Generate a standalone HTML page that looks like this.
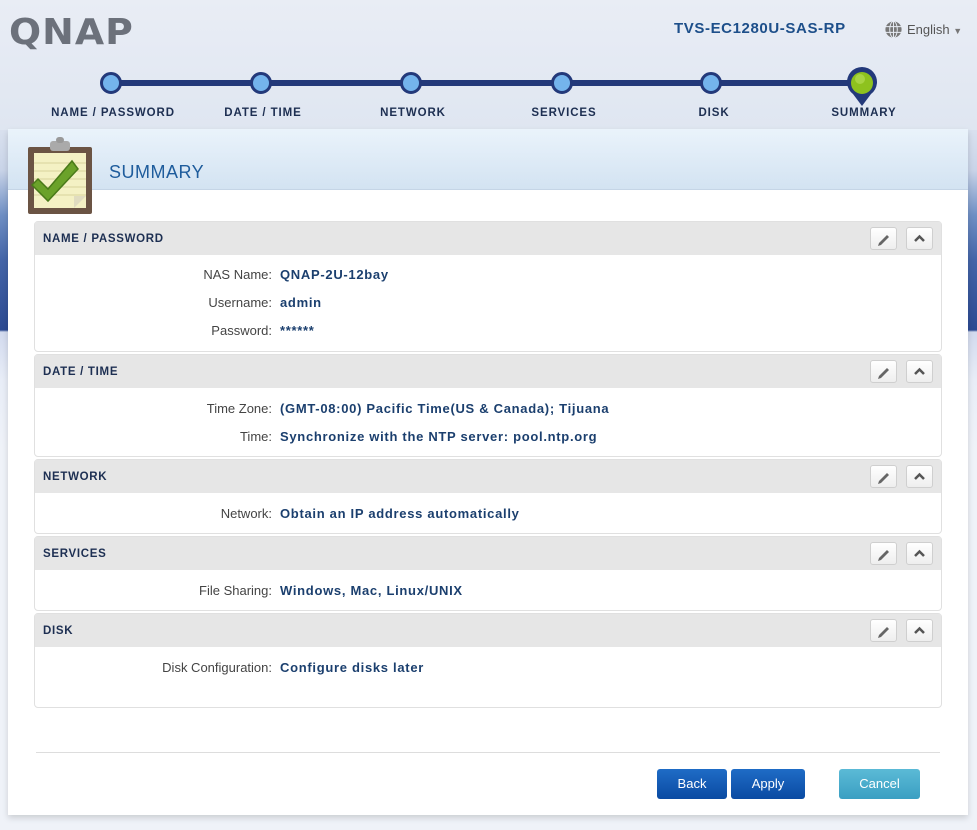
<!DOCTYPE html>
<html><head><style>
*{margin:0;padding:0;box-sizing:border-box}
body{width:977px;height:830px;overflow:hidden;font-family:"Liberation Sans",Tahoma,sans-serif;position:relative;
background:linear-gradient(to bottom,#e9edf5 0px,#dde4f0 120px,#c9d4e8 170px,#6f8fc4 215px,#4465a8 260px,#2c4a92 330px,#d2daee 332px,#e8edf7 380px,#eff2f8 450px,#eff2f8 830px);}
.top{position:absolute;left:0;top:0;width:977px;height:130px;background:linear-gradient(#e9edf5,#dfe6f1)}
.logo{position:absolute;left:9px;top:12px;font:900 36px "DejaVu Sans","Liberation Sans",sans-serif;color:#6c717b;letter-spacing:1px;transform:scaleX(1.05);transform-origin:left;}
.model{position:absolute;left:674px;top:20px;font:bold 15px "Liberation Sans",sans-serif;color:#1d4f8a;letter-spacing:.6px}
.lang{position:absolute;left:884px;top:20px;font-size:13px;color:#555}
.line{position:absolute;left:111px;top:80px;width:751px;height:6px;background:#23397a}
.dot{position:absolute;top:72px;width:22px;height:22px;border-radius:50%;background:#74b4ec;border:3px solid #23397a}
.lbl{position:absolute;top:107px;font:bold 11.5px "Liberation Sans",sans-serif;color:#1d2f52;width:160px;text-align:center;letter-spacing:.9px}
.panel{position:absolute;left:8px;top:129px;width:960px;height:686px;background:#fff;box-shadow:0 3px 6px rgba(0,0,0,.15)}
.hdr{position:absolute;left:0;top:0;width:960px;height:61px;background:linear-gradient(#eaf3fb,#d3e3f2);border-bottom:1px solid #c5d5e6}
.title{position:absolute;left:101px;top:33px;font-size:18px;color:#1e5c9c;letter-spacing:.5px}
.sec{position:absolute;left:26px;width:908px;border:1px solid #e0e0e0;border-radius:4px;background:#fff}
.sh{height:33px;background:#e6e6e6;font:bold 11.5px "Liberation Sans",sans-serif;color:#1d2f52;padding:11px 0 0 8px;position:relative;letter-spacing:.7px}
.b{position:absolute;top:5px;width:27px;height:23px;border:1px solid #cfcfcf;border-radius:3px;background:linear-gradient(#fff,#eee)}
.row{position:absolute;left:0;width:908px;font-size:13px}
.row .k{position:absolute;right:671px;color:#444;text-align:right;white-space:nowrap}
.row .v{position:absolute;left:245px;font-weight:bold;color:#1b3f6e;white-space:nowrap;letter-spacing:.7px}
.btn{position:absolute;top:640px;height:30px;border-radius:3px;color:#fff;font-size:13px;text-align:center;line-height:30px}
</style></head><body>
<div class="top"></div>
<div class="logo">QNAP</div>
<div class="model">TVS-EC1280U-SAS-RP</div>
<div class="lang"><svg width="19" height="19" viewBox="0 0 20 20" style="vertical-align:-5px;margin-right:4px"><circle cx="10" cy="10" r="8.5" fill="#777"/><g stroke="#e8edf5" stroke-width="1" fill="none"><line x1="1" y1="7" x2="19" y2="7"/><line x1="1" y1="13" x2="19" y2="13"/><line x1="10" y1="1" x2="10" y2="19"/><ellipse cx="10" cy="10" rx="4" ry="8.5"/></g></svg>English <span style="font-size:9px;color:#777">▼</span></div>
<div class="line"></div>
<div class="dot" style="left:100px"></div><div class="dot" style="left:250px"></div><div class="dot" style="left:400px"></div><div class="dot" style="left:551px"></div><div class="dot" style="left:700px"></div>
<svg style="position:absolute;left:845px;top:66px" width="34" height="42" viewBox="0 0 34 42"><path d="M17 40 L8 28 A15 15 0 1 1 26 28 Z" fill="#23397a"/><circle cx="17" cy="17" r="11" fill="#8ec21e"/><circle cx="15" cy="13" r="5" fill="#b4dc52" opacity=".7"/></svg>
<div class="lbl" style="left:33px">NAME / PASSWORD</div>
<div class="lbl" style="left:183px">DATE / TIME</div>
<div class="lbl" style="left:333px">NETWORK</div>
<div class="lbl" style="left:484px">SERVICES</div>
<div class="lbl" style="left:634px">DISK</div>
<div class="lbl" style="left:784px">SUMMARY</div>
<div class="panel">
<div class="hdr"><div class="title">SUMMARY</div></div>
<svg style="position:absolute;left:18px;top:8px" width="70" height="80" viewBox="0 0 70 80"><rect x="2" y="10" width="64" height="67" fill="#6b5444" rx="2"/><rect x="8" y="16" width="52" height="55" fill="#f4f1c4"/><g stroke="#d8d49c" stroke-width="1"><line x1="8" y1="26" x2="60" y2="26"/><line x1="8" y1="34" x2="60" y2="34"/><line x1="8" y1="42" x2="60" y2="42"/><line x1="8" y1="50" x2="60" y2="50"/><line x1="8" y1="58" x2="60" y2="58"/></g><path d="M48 71 L60 59 L48 59Z" fill="#e0dcc0"/><rect x="24" y="4" width="20" height="10" rx="3" fill="#aaa"/><rect x="30" y="0" width="8" height="6" rx="3" fill="#999"/><path d="M12 42 L22 52 L46 24 L52 32 L22 64 L6 48Z" fill="#6ba22a" stroke="#4a7a1a" stroke-width="1.5"/></svg>
<div class="sec" style="top:92px;height:131px"><div class="sh">NAME / PASSWORD<div class="b" style="right:44px"></div><div class="b" style="right:8px"></div></div>
<div class="row" style="top:45px"><span class="k">NAS Name:</span><span class="v">QNAP-2U-12bay</span></div>
<div class="row" style="top:73px"><span class="k">Username:</span><span class="v">admin</span></div>
<div class="row" style="top:101px"><span class="k">Password:</span><span class="v">******</span></div></div>
<div class="sec" style="top:225px;height:103px"><div class="sh">DATE / TIME<div class="b" style="right:44px"></div><div class="b" style="right:8px"></div></div>
<div class="row" style="top:46px"><span class="k">Time Zone:</span><span class="v">(GMT-08:00) Pacific Time(US &amp; Canada); Tijuana</span></div>
<div class="row" style="top:74px"><span class="k">Time:</span><span class="v">Synchronize with the NTP server: pool.ntp.org</span></div></div>
<div class="sec" style="top:330px;height:75px"><div class="sh">NETWORK<div class="b" style="right:44px"></div><div class="b" style="right:8px"></div></div>
<div class="row" style="top:46px"><span class="k">Network:</span><span class="v">Obtain an IP address automatically</span></div></div>
<div class="sec" style="top:407px;height:75px"><div class="sh">SERVICES<div class="b" style="right:44px"></div><div class="b" style="right:8px"></div></div>
<div class="row" style="top:46px"><span class="k">File Sharing:</span><span class="v">Windows, Mac, Linux/UNIX</span></div></div>
<div class="sec" style="top:484px;height:95px"><div class="sh">DISK<div class="b" style="right:44px"></div><div class="b" style="right:8px"></div></div>
<div class="row" style="top:46px"><span class="k">Disk Configuration:</span><span class="v">Configure disks later</span></div></div>
<div style="position:absolute;left:28px;top:623px;width:904px;height:1px;background:#ddd"></div>
<div class="btn" style="left:649px;width:70px;background:linear-gradient(#1f6cc6,#0a4aa2)">Back</div>
<div class="btn" style="left:723px;width:74px;background:linear-gradient(#1f6cc6,#0a4aa2)">Apply</div>
<div class="btn" style="left:831px;width:81px;background:linear-gradient(#5bbad6,#3a9fc2)">Cancel</div>
</div>
<script>
document.querySelectorAll('.sec').forEach(s=>{const bs=s.querySelectorAll('.b');bs[0].innerHTML='<svg width="25" height="21" viewBox="0 0 25 21"><path d="M8 15 L16 7 L18 9 L10 17 L7 18Z" fill="#666"/></svg>';bs[1].innerHTML='<svg width="25" height="21" viewBox="0 0 25 21"><path d="M8 13 L12.5 8.5 L17 13" stroke="#555" stroke-width="2.5" fill="none"/></svg>';});
</script>
</body></html>
